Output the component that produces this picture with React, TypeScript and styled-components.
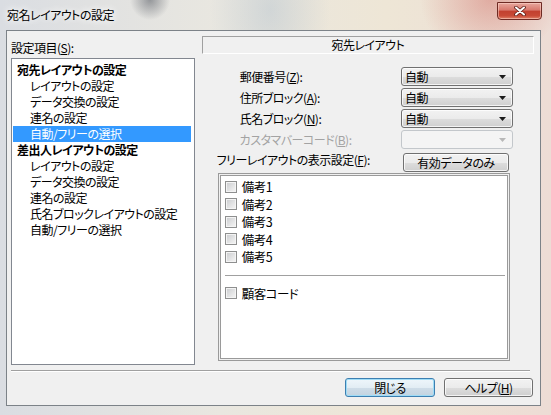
import React from "react";
import styled, { createGlobalStyle, css } from "styled-components";

const GlobalStyle = createGlobalStyle`
  html, body {
    margin: 0;
    padding: 0;
  }
  body {
    width: 551px;
    height: 415px;
    overflow: hidden;
    font-family: "Noto Sans CJK JP", "Noto Sans", sans-serif;
    font-size: 12px;
    font-feature-settings: "palt";
    letter-spacing: -0.5px;
    color: #000;
  }
`;

const Frame = styled.div`
  width: 551px;
  height: 415px;
  box-sizing: border-box;
  display: flex;
  flex-direction: column;
  padding: 0 10px 9px 6px;
  background:
    radial-gradient(circle at 150px 0px, rgba(70, 75, 85, 0.5) 0, rgba(70, 75, 85, 0) 20px),
    radial-gradient(ellipse at 490px 0px, rgba(205, 95, 85, 0.4) 0, rgba(205, 95, 85, 0) 70px),
    radial-gradient(ellipse at 270px 10px, rgba(150, 175, 200, 0.3) 0, rgba(150, 175, 200, 0) 60px),
    linear-gradient(90deg, #dadde2 0%, #e9e7e0 40%, #eee6d6 70%, #eddcd5 100%);
`;

const TitleBar = styled.div`
  height: 30px;
  flex: none;
  display: flex;
  justify-content: space-between;
  align-items: flex-start;
`;

const TitleText = styled.div`
  margin: 7px 0 0 1px;
  font-size: 12px;
  line-height: 16px;
  text-shadow: 0 0 6px #fff, 0 0 10px #fff;
`;

const CloseButton = styled.div`
  margin: 2px -1px 0 0;
  width: 45px;
  height: 18px;
  box-sizing: border-box;
  border: 1px solid #6e2b24;
  border-radius: 0 0 4px 4px;
  background: linear-gradient(180deg, #e8a89e 0%, #d8786c 45%, #c2402f 50%, #c84a36 80%, #e0836a 100%);
  box-shadow: inset 0 0 0 1px rgba(255, 220, 210, 0.5);
  display: flex;
  align-items: center;
  justify-content: center;
`;

const Client = styled.div`
  flex: 1;
  display: flex;
  flex-direction: column;
  border: 1px solid #7c8288;
  background: #f0f0f0;
`;

const Main = styled.div`
  display: flex;
  padding: 5px 6px 0 4px;
`;

const LeftCol = styled.div`
  width: 184px;
  display: flex;
  flex-direction: column;
`;

const Mnemonic = styled.span`
  text-decoration: underline;
`;

const SectionLabel = styled.div`
  margin-top: 5px;
  line-height: 14px;
`;

const ListBox = styled.div`
  margin-top: 3px;
  height: 307px;
  box-sizing: border-box;
  border: 1px solid #828790;
  background: #fff;
  padding: 3px 3px 0 1px;
`;

const TreeRow = styled.div<{ $level: number; $selected?: boolean }>`
  height: 16px;
  line-height: 16px;
  padding-left: ${({ $level }) => ($level === 0 ? 4 : 17)}px;
  font-weight: ${({ $level }) => ($level === 0 ? 700 : 400)};
  white-space: nowrap;
  ${({ $selected }) =>
    $selected &&
    css`
      background: #3399ff;
      color: #fff;
    `}
`;

const RightCol = styled.div`
  margin-left: 7px;
  width: 333px;
  display: flex;
  flex-direction: column;
`;

const PanelHeader = styled.div`
  height: 18px;
  box-sizing: border-box;
  border: 1px solid;
  border-color: #a0a0a0 #ffffff #ffffff #a0a0a0;
  text-align: center;
  line-height: 16px;
`;

const Form = styled.div`
  margin-top: 13px;
  padding: 0 21px 0 38px;
  display: grid;
  grid-template-columns: 1fr 112px;
  row-gap: 2px;
`;

const FieldLabel = styled.div<{ $disabled?: boolean }>`
  line-height: 19px;
  color: ${({ $disabled }) => ($disabled ? "#a3a3a3" : "#000")};
`;

const vistaButton = css`
  box-sizing: border-box;
  height: 19px;
  border: 1px solid #707070;
  border-radius: 3px;
  background: linear-gradient(180deg, #f2f2f2 0%, #ebebeb 50%, #dddddd 51%, #cfcfcf 100%);
  box-shadow: inset 0 0 0 1px rgba(255, 255, 255, 0.75);
`;

const Combo = styled.div<{ $disabled?: boolean }>`
  ${vistaButton};
  display: flex;
  align-items: center;
  justify-content: space-between;
  padding: 0 6px 0 3px;
  line-height: 17px;
  ${({ $disabled }) =>
    $disabled &&
    css`
      border-color: #c3c7cb;
      background: #f4f4f4;
      box-shadow: none;
    `}
`;

const FreeRow = styled.div`
  margin-top: 4px;
  padding: 0 25px 0 15px;
  display: flex;
  justify-content: space-between;
  align-items: flex-start;
`;

const FreeLabel = styled.div`
  line-height: 14px;
`;

const PushButton = styled.div<{ $width: number; $default?: boolean }>`
  ${vistaButton};
  width: ${({ $width }) => $width}px;
  text-align: center;
  line-height: 17px;
  ${({ $default }) =>
    $default &&
    css`
      border-color: #3c7fb1;
      box-shadow: inset 0 0 0 1px #9fdcf6;
      background: linear-gradient(180deg, #eef6fb 0%, #e2edf4 50%, #cfdde8 51%, #c2d3e0 100%);
    `}
`;

const CheckList = styled.div`
  margin: 1px 24px 0 16px;
  height: 188px;
  box-sizing: border-box;
  border: 1px solid #9a9a9a;
  box-shadow: inset 0 0 0 1px #f0f0f0, inset 0 0 0 2px #9a9a9a;
  background: #fff;
  padding: 4px 4px 0 6px;
`;

const CheckItem = styled.div`
  height: 17.5px;
  display: flex;
  align-items: center;
  gap: 5px;
  font-size: 12.5px;
`;

const CheckBox = styled.span`
  width: 12px;
  height: 12px;
  box-sizing: border-box;
  border: 1px solid #8e8f8f;
  background: linear-gradient(135deg, #c9cbce 0%, #eeeeee 80%);
  box-shadow: inset 0 0 0 1px #f4f4f4;
`;

const ListDivider = styled.div`
  margin: 9px 0 9px 0;
  border-top: 1px solid #a0a0a0;
`;

const Separator = styled.div`
  margin: 5px 10px 0 4px;
  border-top: 1px solid #a0a0a0;
  border-bottom: 1px solid #ffffff;
`;

const Footer = styled.div`
  display: flex;
  justify-content: flex-end;
  gap: 9px;
  padding: 6px 7px 0 0;
`;

function Arrow({ disabled }: { disabled?: boolean }) {
  return (
    <svg width="7" height="4" viewBox="0 0 7 4">
      <polygon points="0,0 7,0 3.5,4" fill={disabled ? "#b8b8b8" : "#1a1a1a"} />
    </svg>
  );
}

const tree = [
  { label: "宛先レイアウトの設定", level: 0 },
  { label: "レイアウトの設定", level: 1 },
  { label: "データ交換の設定", level: 1 },
  { label: "連名の設定", level: 1 },
  { label: "自動/フリーの選択", level: 1, selected: true },
  { label: "差出人レイアウトの設定", level: 0 },
  { label: "レイアウトの設定", level: 1 },
  { label: "データ交換の設定", level: 1 },
  { label: "連名の設定", level: 1 },
  { label: "氏名ブロックレイアウトの設定", level: 1 },
  { label: "自動/フリーの選択", level: 1 },
];

const fields = [
  { name: "郵便番号", key: "Z", value: "自動" },
  { name: "住所ブロック", key: "A", value: "自動" },
  { name: "氏名ブロック", key: "N", value: "自動" },
  { name: "カスタマバーコード", key: "B", value: "", disabled: true },
];

export default function App() {
  return (
    <>
      <GlobalStyle />
      <Frame>
        <TitleBar>
          <TitleText>宛名レイアウトの設定</TitleText>
          <CloseButton>
            <svg width="12" height="10" viewBox="0 0 12 10">
              <path d="M2 1.5 L10 8.5 M10 1.5 L2 8.5" stroke="#5a1d16" strokeWidth="3.6" strokeLinecap="round" />
              <path d="M2 1.5 L10 8.5 M10 1.5 L2 8.5" stroke="#ffffff" strokeWidth="2" strokeLinecap="round" />
            </svg>
          </CloseButton>
        </TitleBar>
        <Client>
          <Main>
            <LeftCol>
              <SectionLabel>
                設定項目(<Mnemonic>S</Mnemonic>):
              </SectionLabel>
              <ListBox>
                {tree.map((t, i) => (
                  <TreeRow key={i} $level={t.level} $selected={t.selected}>
                    {t.label}
                  </TreeRow>
                ))}
              </ListBox>
            </LeftCol>
            <RightCol>
              <PanelHeader>宛先レイアウト</PanelHeader>
              <Form>
                {fields.map((f) => (
                  <React.Fragment key={f.key}>
                    <FieldLabel $disabled={f.disabled}>
                      {f.name}(<Mnemonic>{f.key}</Mnemonic>):
                    </FieldLabel>
                    <Combo $disabled={f.disabled}>
                      <span>{f.value}</span>
                      <Arrow disabled={f.disabled} />
                    </Combo>
                  </React.Fragment>
                ))}
              </Form>
              <FreeRow>
                <FreeLabel>
                  フリーレイアウトの表示設定(<Mnemonic>F</Mnemonic>):
                </FreeLabel>
                <PushButton $width={106}>有効データのみ</PushButton>
              </FreeRow>
              <CheckList>
                {["備考1", "備考2", "備考3", "備考4", "備考5"].map((c) => (
                  <CheckItem key={c}>
                    <CheckBox />
                    {c}
                  </CheckItem>
                ))}
                <ListDivider />
                <CheckItem>
                  <CheckBox />
                  顧客コード
                </CheckItem>
              </CheckList>
            </RightCol>
          </Main>
          <Separator />
          <Footer>
            <PushButton $width={90} $default>
              閉じる
            </PushButton>
            <PushButton $width={89}>
              ヘルプ(<Mnemonic>H</Mnemonic>)
            </PushButton>
          </Footer>
        </Client>
      </Frame>
    </>
  );
}
